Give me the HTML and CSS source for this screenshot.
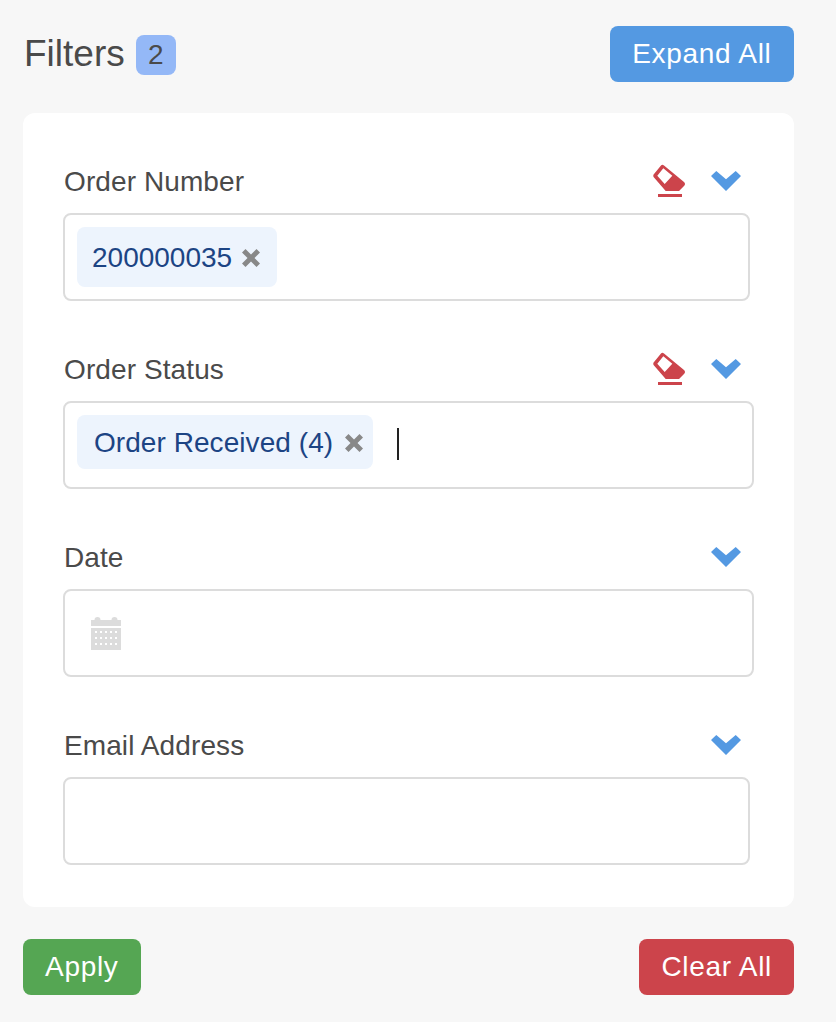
FILE: index.html
```html
<!DOCTYPE html>
<html lang="en">
<head>
    <meta charset="UTF-8">
    <meta name="viewport" content="width=device-width, initial-scale=1.0">
    <title>Filters</title>
    <link rel="stylesheet" href="styles.css">
</head>
<body>
    <div class="filters">
        <div class="filters-head">
            <h1>Filters <span class="count">2</span></h1>
            <button class="btn btn-blue">Expand All</button>
        </div>

        <div class="card">
            <div class="field">
                <div class="field-head">
                    <label>Order Number</label>
                    <svg class="icon-clear" viewBox="0 0 33 34"><path fill="#cc444b" fill-rule="evenodd" d="M8 1.500Q9.300 0 11 1.500L31 18Q33 20 31 22L26 27H12.700L1 13.500Q-.5 11.700 1 10ZM4.300 11.700 11.700 20 19.300 11.700 10.300 4.300Z"/><rect fill="#cc444b" x="5" y="30" width="24" height="3"/></svg>
                    <svg class="icon-chevron" viewBox="0 0 30 20"><path fill="#5499e2" d="M0 5 5.300 0 15 8.300 24.700 0 30 5 15 20Z"/></svg>
                </div>
                <div class="input input-short">
                    <span class="chip chip-num">200000035<svg class="chip-x" viewBox="0 0 18 18"><path fill="#888" d="M3.500 0 9 5.500 14.500 0 18 3.500 12.500 9 18 14.500 14.500 18 9 12.500 3.500 18 0 14.500 5.500 9 0 3.500Z"/></svg></span>
                </div>
            </div>

            <div class="field">
                <div class="field-head">
                    <label>Order Status</label>
                    <svg class="icon-clear" viewBox="0 0 33 34"><path fill="#cc444b" fill-rule="evenodd" d="M8 1.500Q9.300 0 11 1.500L31 18Q33 20 31 22L26 27H12.700L1 13.500Q-.5 11.700 1 10ZM4.300 11.700 11.700 20 19.300 11.700 10.300 4.300Z"/><rect fill="#cc444b" x="5" y="30" width="24" height="3"/></svg>
                    <svg class="icon-chevron" viewBox="0 0 30 20"><path fill="#5499e2" d="M0 5 5.300 0 15 8.300 24.700 0 30 5 15 20Z"/></svg>
                </div>
                <div class="input">
                    <span class="chip chip-status">Order Received (4)<svg class="chip-x" viewBox="0 0 18 18"><path fill="#888" d="M3.500 0 9 5.500 14.500 0 18 3.500 12.500 9 18 14.500 14.500 18 9 12.500 3.500 18 0 14.500 5.500 9 0 3.500Z"/></svg></span>
                    <span class="caret"></span>
                </div>
            </div>

            <div class="field">
                <div class="field-head">
                    <label>Date</label>
                    <svg class="icon-chevron" viewBox="0 0 30 20"><path fill="#5499e2" d="M0 5 5.300 0 15 8.300 24.700 0 30 5 15 20Z"/></svg>
                </div>
                <div class="input input-date">
                    <svg class="icon-cal" viewBox="0 0 30 33">
                        <path fill="#dcdcdc" d="M0 9V3H3.500A3 3 0 0 1 9.500 3H20.500A3 3 0 0 1 26.500 3H30V9Z"/>
                        <path fill="#dcdcdc" fill-rule="evenodd" d="M0 11H30V33H0ZM4 14v2h2v-2ZM9 14v2h2v-2ZM14 14v2h2v-2ZM19 14v2h2v-2ZM24 14v2h2v-2ZM4 20v2h2v-2ZM9 20v2h2v-2ZM14 20v2h2v-2ZM19 20v2h2v-2ZM24 20v2h2v-2ZM4 26v2h2v-2ZM9 26v2h2v-2ZM14 26v2h2v-2ZM19 26v2h2v-2ZM24 26v2h2v-2Z"/>
                    </svg>
                </div>
            </div>

            <div class="field">
                <div class="field-head">
                    <label>Email Address</label>
                    <svg class="icon-chevron" viewBox="0 0 30 20"><path fill="#5499e2" d="M0 5 5.300 0 15 8.300 24.700 0 30 5 15 20Z"/></svg>
                </div>
                <div class="input input-short"></div>
            </div>
        </div>

        <div class="filters-foot">
            <button class="btn btn-green">Apply</button>
            <button class="btn btn-red">Clear All</button>
        </div>
    </div>
</body>
</html>
```

FILE: styles.css
```css
html, body {
    height: 100%;
}

body {
    margin: 0;
    background-color: #f7f7f7;
    color: #4a4a4a;
    font-family: "Liberation Sans", Arial, sans-serif;
}

.filters {
    padding: 26px 42px 0 23px;
}

.filters-head {
    display: flex;
    justify-content: space-between;
    align-items: center;
    margin-bottom: 31px;
}

h1 {
    display: flex;
    align-items: center;
    gap: 11px;
    margin: 0;
    padding-left: 1px;
    font-size: 37px;
    font-weight: normal;
}

.count {
    width: 40px;
    height: 40px;
    margin-top: 2px;
    line-height: 40px;
    text-align: center;
    font-size: 28px;
    background-color: #94b8f7;
    border-radius: 8px;
}

.btn {
    height: 56px;
    padding: 0 22px;
    border: none;
    border-radius: 8px;
    color: white;
    font-family: inherit;
    font-size: 28px;
    letter-spacing: .7px;
}

.btn-blue {
    background-color: #5499e2;
    padding: 0 22.5px;
}

.btn-green { background-color: #55a653; }
.btn-red { background-color: #cc444b; }

.card {
    padding: 46px 40px 42px;
    background-color: white;
    border-radius: 12px;
}

.field {
    margin-bottom: 46px;
}

.field:last-child {
    margin-bottom: 0;
}

.field-head {
    display: flex;
    align-items: center;
    gap: 25px;
    height: 54px;
    padding-bottom: 10px;
    padding-right: 13px;
    box-sizing: border-box;
}

.field-head label {
    margin-left: 1px;
    margin-right: auto;
    padding-top: 2px;
    font-size: 28px;
    letter-spacing: .1px;
}

.icon-clear {
    width: 33px;
    height: 34px;
}

.icon-chevron {
    width: 30px;
    height: 20px;
}

.input {
    display: flex;
    align-items: flex-start;
    box-sizing: border-box;
    height: 88px;
    padding: 12px 12px 0;
    border: 2px solid #dcdcdc;
    border-radius: 8px;
}

.input-short {
    width: 687px;
}

.chip {
    display: flex;
    align-items: center;
    height: 54px;
    box-sizing: border-box;
    background-color: #edf4fd;
    color: #1c4484;
    border-radius: 8px;
    font-size: 28px;
}

.chip-num {
    height: 60px;
    padding: 1px 17px 0 15px;
}

.chip-status {
    padding: 2px 10px 0 17px;
    letter-spacing: .06px;
}

.chip-x {
    width: 18px;
    height: 18px;
    margin-left: 10px;
}

.chip-status .chip-x {
    margin-left: 11.5px;
}

.caret {
    width: 2px;
    height: 32px;
    margin-top: 13px;
    margin-left: 24px;
    background-color: #222;
}

.input-date {
    padding: 26px 0 0 26px;
}

.icon-cal {
    width: 30px;
    height: 33px;
}

.filters-foot {
    display: flex;
    justify-content: space-between;
    margin-top: 32px;
}
```
